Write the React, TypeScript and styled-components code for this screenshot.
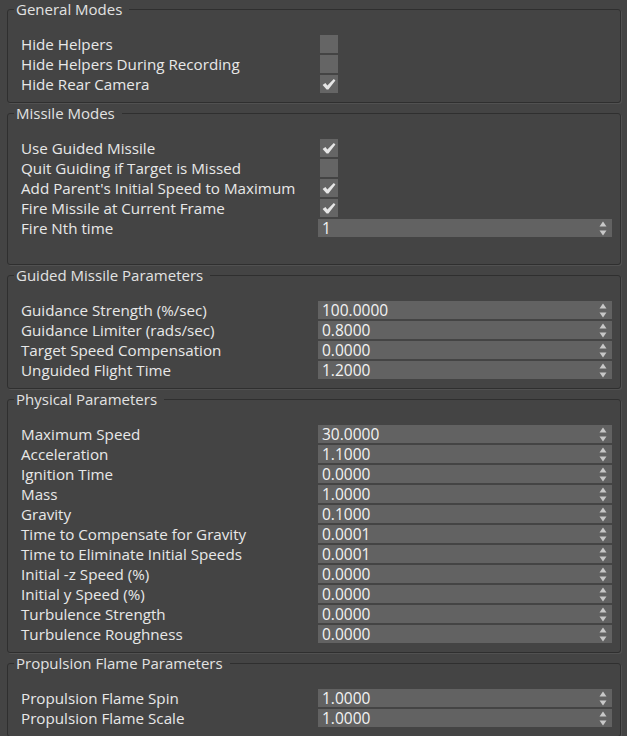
import styled, { createGlobalStyle } from "styled-components";

type Row =
  | { label: string; kind: "check"; checked: boolean }
  | { label: string; kind: "spin"; value: string };

type Group = { title: string; rows: Row[]; tail?: boolean };

const check = (label: string, checked: boolean): Row => ({ label, kind: "check", checked });
const spin = (label: string, value: string): Row => ({ label, kind: "spin", value });

const groups: Group[] = [
  {
    title: "General Modes",
    rows: [
      check("Hide Helpers", false),
      check("Hide Helpers During Recording", false),
      check("Hide Rear Camera", true),
    ],
  },
  {
    title: "Missile Modes",
    tail: true,
    rows: [
      check("Use Guided Missile", true),
      check("Quit Guiding if Target is Missed", false),
      check("Add Parent's Initial Speed to Maximum", true),
      check("Fire Missile at Current Frame", true),
      spin("Fire Nth time", "1"),
    ],
  },
  {
    title: "Guided Missile Parameters",
    rows: [
      spin("Guidance Strength (%/sec)", "100.0000"),
      spin("Guidance Limiter (rads/sec)", "0.8000"),
      spin("Target Speed Compensation", "0.0000"),
      spin("Unguided Flight Time", "1.2000"),
    ],
  },
  {
    title: "Physical Parameters",
    rows: [
      spin("Maximum Speed", "30.0000"),
      spin("Acceleration", "1.1000"),
      spin("Ignition Time", "0.0000"),
      spin("Mass", "1.0000"),
      spin("Gravity", "0.1000"),
      spin("Time to Compensate for Gravity", "0.0001"),
      spin("Time to Eliminate Initial Speeds", "0.0001"),
      spin("Initial -z Speed (%)", "0.0000"),
      spin("Initial y Speed (%)", "0.0000"),
      spin("Turbulence Strength", "0.0000"),
      spin("Turbulence Roughness", "0.0000"),
    ],
  },
  {
    title: "Propulsion Flame Parameters",
    rows: [
      spin("Propulsion Flame Spin", "1.0000"),
      spin("Propulsion Flame Scale", "1.0000"),
    ],
  },
];

// heavy tick, thick short arm and a tapering long arm
const CheckMark = () => (
  <svg width="18" height="18" viewBox="0 0 18 18">
    <path
      d="M2.6 10 L5.4 8 L7.4 10.6 L13.8 4 L15.4 5.4 L8.4 14.4 L6.6 14.4 Z"
      fill="#e6e6e6"
    />
  </svg>
);

const SpinArrows = () => (
  <svg width="8" height="15" viewBox="0 0 8 15">
    <path d="M0.5 5.5 L4 0.5 L7.5 5.5 Z" fill="#c8c8c8" />
    <path d="M0.5 9.5 L7.5 9.5 L4 14.5 Z" fill="#c8c8c8" />
  </svg>
);

const App = (): JSX.Element => {
  return (
    <>
      <GlobalStyle />
      <Panel>
        {groups.map((group) => (
          <GroupBox key={group.title} $tail={group.tail}>
            <GroupTitle>{group.title}</GroupTitle>
            {group.rows.map((row) => (
              <ParamRow key={row.label}>
                <Label>{row.label}</Label>
                {row.kind === "check" ? (
                  <CheckBox>{row.checked && <CheckMark />}</CheckBox>
                ) : (
                  <Spinner>
                    <SpinValue>{row.value}</SpinValue>
                    <SpinArrows />
                  </Spinner>
                )}
              </ParamRow>
            ))}
          </GroupBox>
        ))}
      </Panel>
    </>
  );
};

const GlobalStyle = createGlobalStyle`
  html, body {
    margin: 0;
    padding: 0;
    background: #444444;
    overflow: hidden;
  }
  body {
    font-family: "Open Sans", "Noto Sans", sans-serif;
  }
`;

const Panel = styled.div`
  display: flex;
  flex-direction: column;
  gap: 1px;
  padding: 0 6px 0 7px;
  background: #444444;
`;

const GroupBox = styled.fieldset<{ $tail?: boolean }>`
  margin: 0;
  min-width: 0;
  padding: 16px 8px ${(p) => (p.$tail ? "26px" : "8px")} 13px;
  border: 1px solid #2f2f2f;
  border-radius: 3px;
  box-shadow: 1px 1px 0 #515151;
`;

const GroupTitle = styled.legend`
  margin-left: -7px;
  padding: 0 7px 0 2px;
  font-size: 15px;
  line-height: 18px;
  color: #e2e2e2;
`;

const ParamRow = styled.div`
  display: grid;
  grid-template-columns: 297px 1fr;
  align-items: center;
  height: 20px;
`;

const Label = styled.span`
  font-size: 15.2px;
  line-height: 20px;
  color: #e8e8e8;
  white-space: nowrap;
`;

const CheckBox = styled.div`
  width: 18px;
  height: 18px;
  margin-left: 2px;
  background: #656565;
  display: flex;
`;

const Spinner = styled.div`
  height: 18px;
  display: flex;
  align-items: center;
  justify-content: space-between;
  padding: 0 5px 0 4px;
  background: #626262;
`;

const SpinValue = styled.span`
  font-size: 15.5px;
  line-height: 18px;
  color: #f2f2f2;
`;

export default App;
